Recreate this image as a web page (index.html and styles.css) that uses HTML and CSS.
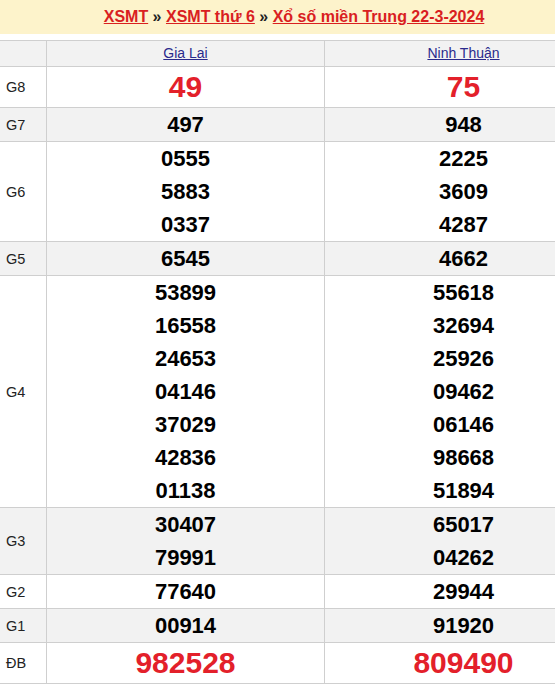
FILE: index.html
```html
<!DOCTYPE html>
<html lang="vi">
<head>
<meta charset="utf-8">
<title>XSMT 22-3-2024</title>
<link rel="stylesheet" href="styles.css">
</head>
<body>
<div class="page">
 <div class="inner">
  <h1 class="crumbs"><a href="#">XSMT</a> » <a href="#">XSMT thứ 6</a> » <a href="#">Xổ số miền Trung 22-3-2024</a></h1>
  <div class="results">
    <div class="row head">
      <div class="cell label"></div>
      <div class="cell"><a class="station" href="#">Gia Lai</a></div>
      <div class="cell"><a class="station" href="#">Ninh Thuận</a></div>
    </div>
    <div class="row big">
      <div class="cell label">G8</div>
      <div class="cell"><span class="num red">49</span></div>
      <div class="cell"><span class="num red">75</span></div>
    </div>
    <div class="row alt">
      <div class="cell label">G7</div>
      <div class="cell"><span class="num">497</span></div>
      <div class="cell"><span class="num">948</span></div>
    </div>
    <div class="row">
      <div class="cell label">G6</div>
      <div class="cell"><span class="num">0555</span><span class="num">5883</span><span class="num">0337</span></div>
      <div class="cell"><span class="num">2225</span><span class="num">3609</span><span class="num">4287</span></div>
    </div>
    <div class="row alt">
      <div class="cell label">G5</div>
      <div class="cell"><span class="num">6545</span></div>
      <div class="cell"><span class="num">4662</span></div>
    </div>
    <div class="row">
      <div class="cell label">G4</div>
      <div class="cell"><span class="num">53899</span><span class="num">16558</span><span class="num">24653</span><span class="num">04146</span><span class="num">37029</span><span class="num">42836</span><span class="num">01138</span></div>
      <div class="cell"><span class="num">55618</span><span class="num">32694</span><span class="num">25926</span><span class="num">09462</span><span class="num">06146</span><span class="num">98668</span><span class="num">51894</span></div>
    </div>
    <div class="row alt">
      <div class="cell label">G3</div>
      <div class="cell"><span class="num">30407</span><span class="num">79991</span></div>
      <div class="cell"><span class="num">65017</span><span class="num">04262</span></div>
    </div>
    <div class="row">
      <div class="cell label">G2</div>
      <div class="cell"><span class="num">77640</span></div>
      <div class="cell"><span class="num">29944</span></div>
    </div>
    <div class="row alt">
      <div class="cell label">G1</div>
      <div class="cell"><span class="num">00914</span></div>
      <div class="cell"><span class="num">91920</span></div>
    </div>
    <div class="row big">
      <div class="cell label">ĐB</div>
      <div class="cell"><span class="num red">982528</span></div>
      <div class="cell"><span class="num red">809490</span></div>
    </div>
  </div>
 </div>
</div>
</body>
</html>
```
FILE: styles.css
```css
* { box-sizing: border-box; }
html, body { margin: 0; padding: 0; background: #fff; }
body { font-family: "Liberation Sans", Arial, sans-serif; color: #222; }
.page { width: 555px; overflow: hidden; }
.inner { width: 603px; }
.crumbs {
  margin: 0 0 6px;
  height: 34px;
  line-height: 34px;
  padding-right: 15px;
  background: #fdf3cb;
  text-align: center;
  font-size: 16px;
  font-weight: bold;
  color: #222;
}
.crumbs a { color: #d9201f; text-decoration: underline; }
.results { border-top: 1px solid #cfcfcf; }
.row {
  display: grid;
  grid-template-columns: 47px 278px 278px;
  border-bottom: 1px solid #cfcfcf;
  background: #fff;
}
.row.alt, .row.head { background: #f2f2f2; }
.cell {
  border-right: 1px solid #cfcfcf;
  display: flex;
  flex-direction: column;
  align-items: center;
  justify-content: center;
}
.cell.label {
  align-items: flex-start;
  padding-left: 6px;
  font-size: 14.5px;
  color: #222;
}
.head .cell { height: 25px; }
.station {
  font-size: 14px;
  color: #2a2a8c;
  text-decoration: underline;
  line-height: 25px;
}
.num {
  display: block;
  font-size: 22px;
  font-weight: bold;
  line-height: 33px;
  color: #000;
}
.big .num { line-height: 40px; font-size: 30px; }
.num.red { color: #e3202a; }
```
